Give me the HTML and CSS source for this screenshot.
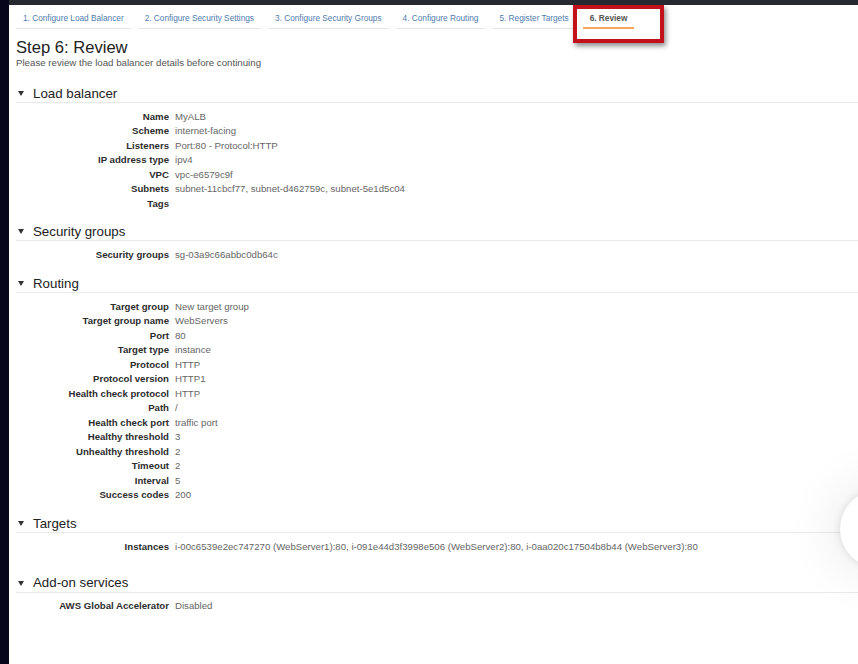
FILE: index.html
```html
<!DOCTYPE html>
<html>
<head>
<meta charset="utf-8">
<link rel="stylesheet" href="styles.css">
</head>
<body>
<div class="frame">
  <div class="sidebar"></div>
  <div class="main">
    <div class="topbar"></div>
    <nav class="tabs">
      <div class="tab">1. Configure Load Balancer</div>
      <div class="tab">2. Configure Security Settings</div>
      <div class="tab">3. Configure Security Groups</div>
      <div class="tab">4. Configure Routing</div>
      <div class="tab">5. Register Targets</div>
      <div class="tab active">6. Review</div>
      <div class="highlight"></div>
    </nav>
    <h1 class="title">Step 6: Review</h1>
    <p class="subtitle">Please review the load balancer details before continuing</p>

    <section class="section s-lb">
      <h2 class="sec-head"><span class="caret"></span>Load balancer</h2>
      <dl class="rows">
        <dt>Name</dt><dd>MyALB</dd>
        <dt>Scheme</dt><dd>internet-facing</dd>
        <dt>Listeners</dt><dd>Port:80 - Protocol:HTTP</dd>
        <dt>IP address type</dt><dd>ipv4</dd>
        <dt>VPC</dt><dd>vpc-e6579c9f</dd>
        <dt>Subnets</dt><dd>subnet-11cbcf77, subnet-d462759c, subnet-5e1d5c04</dd>
        <dt>Tags</dt><dd></dd>
      </dl>
    </section>

    <section class="section s-sg">
      <h2 class="sec-head"><span class="caret"></span>Security groups</h2>
      <dl class="rows">
        <dt>Security groups</dt><dd>sg-03a9c66abbc0db64c</dd>
      </dl>
    </section>

    <section class="section s-rt">
      <h2 class="sec-head"><span class="caret"></span>Routing</h2>
      <dl class="rows">
        <dt>Target group</dt><dd>New target group</dd>
        <dt>Target group name</dt><dd>WebServers</dd>
        <dt>Port</dt><dd>80</dd>
        <dt>Target type</dt><dd>instance</dd>
        <dt>Protocol</dt><dd>HTTP</dd>
        <dt>Protocol version</dt><dd>HTTP1</dd>
        <dt>Health check protocol</dt><dd>HTTP</dd>
        <dt>Path</dt><dd>/</dd>
        <dt>Health check port</dt><dd>traffic port</dd>
        <dt>Healthy threshold</dt><dd>3</dd>
        <dt>Unhealthy threshold</dt><dd>2</dd>
        <dt>Timeout</dt><dd>2</dd>
        <dt>Interval</dt><dd>5</dd>
        <dt>Success codes</dt><dd>200</dd>
      </dl>
    </section>

    <section class="section s-tg">
      <h2 class="sec-head"><span class="caret"></span>Targets</h2>
      <dl class="rows">
        <dt>Instances</dt><dd>i-00c6539e2ec747270 (WebServer1):80, i-091e44d3f3998e506 (WebServer2):80, i-0aa020c17504b8b44 (WebServer3):80</dd>
      </dl>
    </section>

    <section class="section s-ad">
      <h2 class="sec-head"><span class="caret"></span>Add-on services</h2>
      <dl class="rows">
        <dt>AWS Global Accelerator</dt><dd>Disabled</dd>
      </dl>
    </section>
  </div>
  <div class="bubble"></div>
</div>
</body>
</html>
```

FILE: styles.css
```css
html, body {
  margin: 0;
  padding: 0;
  background: #ffffff;
}
body {
  font-family: "Liberation Sans", Arial, sans-serif;
  overflow: hidden;
}
.frame {
  position: relative;
  display: flex;
  width: 858px;
  height: 664px;
  overflow: hidden;
}
.sidebar {
  width: 9px;
  flex: none;
  background: #07051b;
}
.main {
  flex: 1;
  position: relative;
  background: #ffffff;
}
.topbar {
  height: 5px;
  background: #262a30;
}
.tabs {
  position: relative;
  display: flex;
  gap: 7px;
  padding-left: 7px;
  height: 24px;
}
.tab {
  padding: 0 7px;
  height: 23px;
  line-height: 27px;
  font-size: 8.28px;
  color: #4f7daf;
  border-bottom: 1px solid #e7e7e7;
  white-space: nowrap;
}
.tab.active {
  color: #555;
  font-weight: bold;
  height: 22px;
  border-bottom: 2px solid #f6a55a;
}
.highlight {
  position: absolute;
  left: 564px;
  top: 0;
  width: 83px;
  height: 30px;
  border: 4px solid #c2111b;
  box-shadow: 2px 3px 5px rgba(0,0,0,0.45);
}
.title {
  margin: 9px 0 0 7px;
  font-size: 16.6px;
  line-height: 19px;
  font-weight: normal;
  color: #222;
}
.subtitle {
  margin: 0 0 0 7px;
  font-size: 9.7px;
  line-height: 11px;
  color: #555;
}
.section {
  margin: 0;
}
.s-lb { margin-top: 17px; }
.s-sg { margin-top: 12px; }
.s-rt { margin-top: 13px; }
.s-tg { margin-top: 12.5px; }
.s-ad { margin-top: 20.5px; }
.sec-head {
  margin: 0 0 0 7px;
  height: 17px;
  line-height: 18px;
  font-size: 13.3px;
  font-weight: normal;
  color: #222;
  border-bottom: 1px solid #e9e9e9;
  display: flex;
  align-items: center;
}
.caret {
  display: inline-block;
  width: 0;
  height: 0;
  border-left: 3.5px solid transparent;
  border-right: 3.5px solid transparent;
  border-top: 5px solid #333;
  margin: 0 9px 0 2px;
}
.rows {
  margin: 0;
  padding-top: 6.5px;
  display: grid;
  grid-template-columns: 160px 1fr;
  column-gap: 6px;
  font-size: 9.65px;
  line-height: 14.5px;
}
.rows dt {
  text-align: right;
  font-weight: bold;
  color: #2d2d2d;
  white-space: nowrap;
}
.rows dd {
  margin: 0;
  color: #666;
  white-space: nowrap;
  min-height: 14.5px;
}
.bubble {
  position: absolute;
  left: 840px;
  top: 490px;
  width: 78px;
  height: 78px;
  border-radius: 50%;
  background: #fff;
  box-shadow: 0 0 8px rgba(0,0,0,0.12), 0 0 50px 10px rgba(0,0,0,0.07);
}
```
